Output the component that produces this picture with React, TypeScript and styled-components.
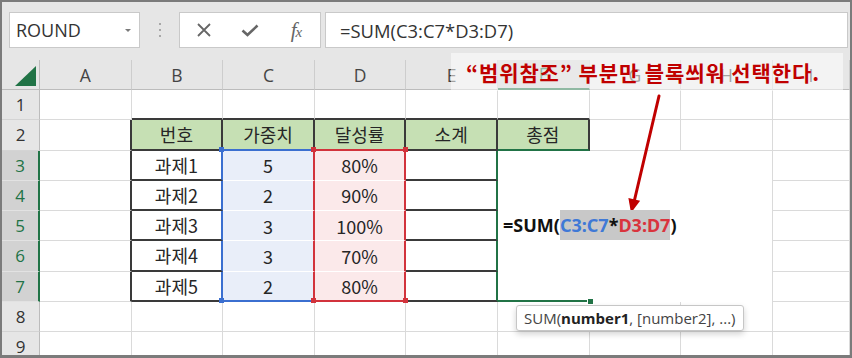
import styled, { createGlobalStyle } from "styled-components";

const GRID = "1px solid #dadada";
const BLACK = "2px solid #3a3a3a";
const BLUE = "2px solid #3b6fd0";
const RED = "2px solid #d2333c";
const GREEN = "2px solid #217346";
const WHITE = "1px solid #ffffff";
const NONE = "none";

const COLS = ["A", "B", "C", "D", "E", "F", "G", "H", "I"];
const headings = ["번호", "가중치", "달성률", "소계", "총점"];
const tasks = [
  ["과제1", "5", "80%"],
  ["과제2", "2", "90%"],
  ["과제3", "3", "100%"],
  ["과제4", "3", "70%"],
  ["과제5", "2", "80%"],
];

const GlobalStyle = createGlobalStyle`
  html, body { margin: 0; padding: 0; background: #fff; }
  body { font-family: "Open Sans", "Noto Sans CJK KR", sans-serif; }
`;

const Frame = styled.div`
  position: relative;
  width: 852px;
  height: 358px;
  box-sizing: border-box;
  border: 2px solid #7b7b7b;
  border-bottom-width: 3px;
  overflow: hidden;
  background: #e6e6e6;
  display: flex;
  flex-direction: column;
`;

/* formula bar */
const FormulaBar = styled.div`
  flex: none;
  height: 58px;
  box-sizing: border-box;
  padding: 10px 2px 0 7px;
  display: flex;
  align-items: flex-start;
`;

const Box = styled.div`
  height: 36px;
  box-sizing: border-box;
  background: #fff;
  border: 1px solid #c9c9c9;
  display: flex;
  align-items: center;
`;

const NameBox = styled(Box)`
  width: 131px;
  justify-content: space-between;
  padding: 0 8px 0 6px;
  font: 18px "Open Sans", sans-serif;
  color: #333;
`;

const Caret = styled.span`
  width: 0;
  height: 0;
  border-left: 3px solid transparent;
  border-right: 3px solid transparent;
  border-top: 3px solid #7a7a7a;
`;

const Dots = styled.div`
  width: 39px;
  height: 36px;
  display: flex;
  flex-direction: column;
  align-items: center;
  justify-content: center;
  gap: 4px;
`;

const Dot = styled.span`
  width: 2px;
  height: 2px;
  background: #a8a8a8;
`;

const ButtonsBox = styled(Box)`
  width: 142px;
  padding-left: 1px;
`;

const IconButton = styled.div`
  width: 46px;
  height: 100%;
  display: flex;
  align-items: center;
  justify-content: center;
  color: #666;
`;

const Fx = styled.span`
  font: italic 21px "Liberation Serif", serif;
  color: #666;
  letter-spacing: -1px;
  small {
    font-size: 15px;
  }
`;

const FormulaInput = styled(Box)`
  flex: 1;
  margin-left: 4px;
  padding-left: 14px;
  font: 18.4px "Open Sans", sans-serif;
  color: #333;
`;

/* sheet */
const Sheet = styled.div`
  flex: none;
  display: grid;
  grid-template-columns: 38px repeat(8, 91.6px) 1fr;
  grid-template-rows: 30px repeat(9, 30.25px);
  background: #fff;
`;

const Corner = styled.div`
  box-sizing: border-box;
  background: #e6e6e6;
  border-right: 1px solid #bcbcbc;
  border-bottom: 1px solid #bcbcbc;
  display: flex;
  align-items: flex-end;
  justify-content: flex-end;
  padding: 0 3px 3px 0;
`;

const ColHeader = styled.div<{ $active?: boolean }>`
  box-sizing: border-box;
  display: flex;
  align-items: center;
  justify-content: center;
  background: ${(p) => (p.$active ? "#d2d2d2" : "#e6e6e6")};
  color: ${(p) => (p.$active ? "#217346" : "#444")};
  border-right: 1px solid #cdcdcd;
  border-bottom: ${(p) => (p.$active ? GREEN : "1px solid #bcbcbc")};
  font: 17.5px "Open Sans", sans-serif;
`;

const RowHeader = styled.div<{ $active?: boolean }>`
  box-sizing: border-box;
  display: flex;
  align-items: center;
  justify-content: center;
  background: ${(p) => (p.$active ? "#d2d2d2" : "#e6e6e6")};
  color: ${(p) => (p.$active ? "#217346" : "#333")};
  border-right: ${(p) => (p.$active ? GREEN : "1px solid #bcbcbc")};
  border-bottom: 1px solid ${(p) => (p.$active ? "#e2e2e2" : "#d4d4d4")};
  font: 17px "Open Sans", sans-serif;
`;

const Cell = styled.div<{ $fill?: string; $right?: string; $bottom?: string }>`
  position: relative;
  box-sizing: border-box;
  display: flex;
  align-items: center;
  justify-content: center;
  background: ${(p) => p.$fill ?? "#fff"};
  border-right: ${(p) => p.$right ?? GRID};
  border-bottom: ${(p) => p.$bottom ?? GRID};
  font: 18px "Noto Sans CJK KR", sans-serif;
  line-height: 1;
  color: #262626;
  white-space: nowrap;
`;

const Handle = styled.span<{ $color: string; $pos: string }>`
  position: absolute;
  z-index: 3;
  width: 5px;
  height: 5px;
  background: ${(p) => p.$color};
  ${(p) => (p.$pos[0] === "t" ? "top: -4px;" : "bottom: -3.5px;")}
  ${(p) => (p.$pos[1] === "l" ? "left: -4px;" : "right: -3.5px;")}
`;

const EditCell = styled(Cell)`
  grid-column: 7;
  grid-row: 4 / span 5;
  z-index: 2;
  justify-content: flex-start;
  padding-left: 5px;
  border-right: none;
  font: 700 18px "Noto Sans", sans-serif;
  line-height: 30px;
  color: #111;
`;

const Picked = styled.span`
  display: inline-block;
  background: #c8c8c8;
  line-height: 30px;
`;

const Ref = styled.span<{ $color: string }>`
  color: ${(p) => p.$color};
`;

const FillHandle = styled.span`
  position: absolute;
  right: -3px;
  bottom: -4px;
  width: 5px;
  height: 5px;
  background: #217346;
  box-shadow: 0 0 0 1px #fff;
`;

/* overlays */
const Note = styled.div`
  position: absolute;
  left: 449px;
  top: 51px;
  width: 392px;
  height: 38px;
  box-sizing: border-box;
  padding-left: 15px;
  display: flex;
  align-items: center;
  background: rgba(255, 255, 255, 0.5);
  font: 700 21px "Noto Sans CJK KR", sans-serif;
  letter-spacing: 0.9px;
  color: #c00000;
  white-space: nowrap;
`;

const Arrow = styled.svg`
  position: absolute;
  left: 622px;
  top: 92px;
`;

const Tooltip = styled.div`
  position: absolute;
  left: 514px;
  top: 303px;
  height: 26px;
  box-sizing: border-box;
  padding: 0 7px;
  display: flex;
  align-items: center;
  background: #fff;
  border: 1px solid #c6c6c6;
  border-radius: 3px;
  box-shadow: 0 3px 6px rgba(0, 0, 0, 0.18);
  font: 15px "Open Sans", sans-serif;
  color: #444;
  white-space: nowrap;
  b {
    color: #222;
  }
`;

type Corners = { pos: string; color: string }[];
type Spec = { fill?: string; right?: string; bottom?: string; text?: string; corners?: Corners };

const blueC = "#3b6fd0";
const redC = "#d2333c";

function spec(row: number, col: number): Spec {
  const s: Spec = {};
  if (row === 1 && col >= 2 && col <= 6) s.bottom = BLACK;
  if (col === 1 && row >= 2 && row <= 7) s.right = BLACK;
  if (row === 2 && col >= 2 && col <= 6) {
    s.fill = "#c6e0b4";
    s.right = BLACK;
    s.text = headings[col - 2];
    s.bottom = [BLACK, BLUE, RED, BLACK, GREEN][col - 2];
  }
  if (row >= 3 && row <= 7) {
    const t = tasks[row - 3];
    const last = row === 7;
    if (col === 2) {
      s.right = BLUE;
      s.bottom = BLACK;
      s.text = t[0];
    }
    if (col === 3) {
      s.fill = "#e9eef9";
      s.right = RED;
      s.bottom = last ? BLUE : WHITE;
      s.text = t[1];
      if (row === 3) s.corners = [{ pos: "tl", color: blueC }];
      if (last) s.corners = [{ pos: "bl", color: blueC }];
    }
    if (col === 4) {
      s.fill = "#fbe9ea";
      s.right = RED;
      s.bottom = last ? RED : WHITE;
      s.text = t[2];
      if (row === 3) s.corners = [{ pos: "tl", color: redC }, { pos: "tr", color: redC }];
      if (last) s.corners = [{ pos: "bl", color: redC }, { pos: "br", color: redC }];
    }
    if (col === 5) {
      s.right = GREEN;
      s.bottom = BLACK;
    }
    if (col === 7) {
      s.right = NONE;
      s.bottom = NONE;
    }
    if (col === 8) s.bottom = NONE;
  }
  return s;
}

function XIcon() {
  return (
    <svg width="16" height="16" viewBox="0 0 16 16">
      <path d="M2 2 L14 14 M14 2 L2 14" stroke="#666" strokeWidth="1.8" fill="none" />
    </svg>
  );
}

function CheckIcon() {
  return (
    <svg width="18" height="13" viewBox="0 0 18 13">
      <path d="M1.5 6.5 L6.5 11 L16.5 1.5" stroke="#666" strokeWidth="2.6" fill="none" />
    </svg>
  );
}

export default function App() {
  const rows = [];
  for (let r = 0; r <= 9; r++) {
    for (let c = 0; c <= 9; c++) {
      const key = `${r}-${c}`;
      if (r === 0 && c === 0) {
        rows.push(
          <Corner key={key}>
            <svg width="21" height="20" viewBox="0 0 21 20">
              <polygon points="0,20 21,0 21,20" fill="#217346" />
            </svg>
          </Corner>
        );
      } else if (r === 0) {
        rows.push(
          <ColHeader key={key} $active={c === 6}>
            {COLS[c - 1]}
          </ColHeader>
        );
      } else if (c === 0) {
        rows.push(
          <RowHeader key={key} $active={r >= 3 && r <= 7}>
            {r}
          </RowHeader>
        );
      } else if (c === 6 && r >= 3 && r <= 7) {
        if (r === 3) {
          rows.push(
            <EditCell key={key} $bottom={GREEN}>
              =SUM(
              <Picked>
                <Ref $color="#3f79d6">C3:C7</Ref>*<Ref $color="#d9343d">D3:D7</Ref>
              </Picked>
              )
              <FillHandle />
            </EditCell>
          );
        }
      } else {
        const s = spec(r, c);
        rows.push(
          <Cell key={key} $fill={s.fill} $right={s.right} $bottom={s.bottom}>
            {s.text}
            {s.corners?.map((h) => (
              <Handle key={h.pos} $pos={h.pos} $color={h.color} />
            ))}
          </Cell>
        );
      }
    }
  }

  return (
    <>
      <GlobalStyle />
      <Frame>
        <FormulaBar>
          <NameBox>
            ROUND
            <Caret />
          </NameBox>
          <Dots>
            <Dot />
            <Dot />
            <Dot />
          </Dots>
          <ButtonsBox>
            <IconButton>
              <XIcon />
            </IconButton>
            <IconButton>
              <CheckIcon />
            </IconButton>
            <IconButton>
              <Fx>
                f<small>x</small>
              </Fx>
            </IconButton>
          </ButtonsBox>
          <FormulaInput>=SUM(C3:C7*D3:D7)</FormulaInput>
        </FormulaBar>
        <Sheet>{rows}</Sheet>

        <Note>“범위참조” 부분만 블록씌워 선택한다.</Note>
        <Arrow width="42" height="124" viewBox="0 0 42 124">
          <line x1="35" y1="2" x2="10.5" y2="106" stroke="#c00000" strokeWidth="3" strokeLinecap="round" />
          <polygon points="7,119 16.1,106.8 4.4,104" fill="#c00000" />
        </Arrow>
        <Tooltip>
          SUM(<b>number1</b>, [number2], ...)
        </Tooltip>
      </Frame>
    </>
  );
}
